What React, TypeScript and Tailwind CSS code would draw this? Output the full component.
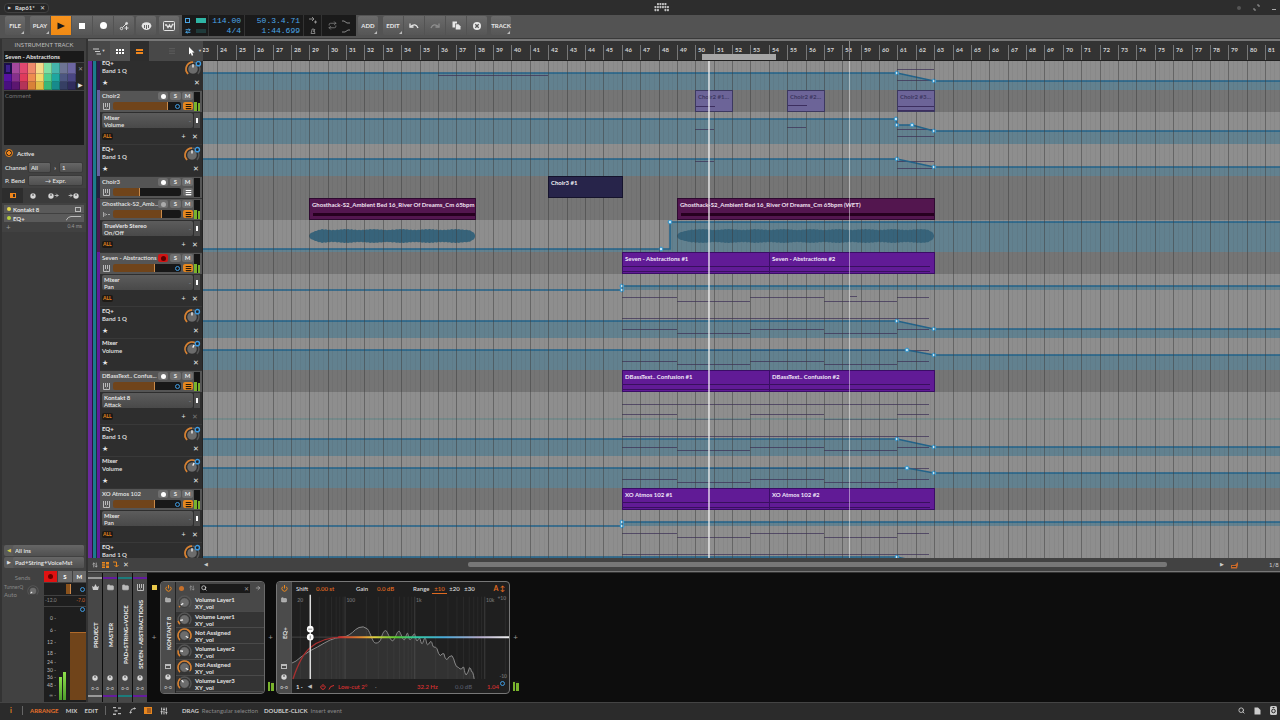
import React from 'react';
import {
  ArrowRight,
  ArrowUpDown,
  Folder,
  Menu,
  Repeat,
  Search,
  SlidersVertical,
  Spline,
} from 'lucide-react';

const FIRST_BAR = 23;
const BAR_WIDTH = 18.38;
const FIRST_BAR_X = -4;
const SIDE_WIDTH = 203;

const barX = (bar: number) => Math.round(FIRST_BAR_X + (bar - FIRST_BAR) * BAR_WIDTH);

// Only the bars that fit in the window
const BARS = Array.from({ length: Math.ceil((window.innerWidth - SIDE_WIDTH) / BAR_WIDTH) }, (_, i) => FIRST_BAR + i);

type Point = [number, number];
type Note = [number, number, number];

interface Clip {
  from: number;
  to: number;
  label: string;
  className: string;
  lines?: Note[];
}

interface Lane {
  title: string;
  param: string;
  kind: 'selector' | 'knob';
  points: Point[];
  base?: number;
  markers?: Point[];
  notes?: Note[];
  thin?: boolean;
  waves?: [number, number][];
}

interface Track {
  name: string;
  strip: string;
  volume: number;
  audio?: boolean;
  armed?: boolean;
  ring?: boolean;
  lanesOpen?: boolean;
  clips: Clip[];
  lanes: Lane[];
}

// Two alternating note levels plus an optional line held over the whole part
const pattern = (a: number, b: number, full?: number): Note[] => {
  const notes: Note[] = [
    [46, 49, a],
    [49, 53, b],
    [53, 57, a],
    [57, 61, b],
    [61, 62.7, a],
  ];
  if (full !== undefined) notes.push([46, 62.7, full]);
  return notes;
};

const eqLane = (notes: Note[] = []): Lane => ({
  title: 'EQ+',
  param: 'Band 1 Q',
  kind: 'knob',
  points: [[0, 15], [61, 15], [63, 23], [200, 23]],
  markers: [[61, 15], [63, 23]],
  notes,
});

const volumeLane: Lane = {
  title: 'Mixer',
  param: 'Volume',
  kind: 'knob',
  points: [[0, 12], [61.5, 12], [63, 17], [200, 17]],
  markers: [[61.5, 12], [63, 17]],
  notes: pattern(23, 26, 12),
};

const panLane: Lane = {
  title: 'Mixer',
  param: 'Pan',
  kind: 'selector',
  base: 16,
  points: [[0, 16], [46, 16], [46, 12], [200, 12]],
  markers: [[46, 16], [46, 12]],
  notes: pattern(23, 27),
};

const purpleClips = (name: string): Clip[] => [
  { from: 46, to: 54, label: `${name} #1`, className: 'border-[#3a0d66] bg-[#611b96] text-[#f0e6f8]', lines: [[46, 54, 13], [46, 54, 18]] },
  { from: 54, to: 63, label: `${name} #2`, className: 'border-[#3a0d66] bg-[#611b96] text-[#f0e6f8]', lines: [[54, 62.7, 13], [54, 62.7, 18]] },
];

const choirClip = 'border-[#3c3860] bg-[#6c6498] text-[#3d3762]';
const ghostClip = 'border-[#2e0a30] bg-[#53164f] text-[#f0e0f0]';
const ghostLabel = 'Ghosthack-S2_Ambient Bed 16_River Of Dreams_Cm 65bpm (WET)';

const TRACKS: Track[] = [
  {
    name: 'Choir2',
    strip: 'bg-[#6660a0]',
    volume: 80,
    ring: true,
    lanesOpen: true,
    clips: [
      { from: 50, to: 52, label: 'Choir2 #1…', className: choirClip, lines: [[50, 51, 15]] },
      { from: 55, to: 57, label: 'Choir2 #2…', className: choirClip, lines: [[55, 56, 14]] },
      { from: 61, to: 63, label: 'Choir2 #3…', className: choirClip, lines: [[61, 63, 15], [61, 63, 19]] },
    ],
    lanes: [
      {
        title: 'Mixer',
        param: 'Volume',
        kind: 'selector',
        points: [[0, 7], [60.9, 7], [61, 13], [61.8, 13], [63, 19], [200, 19]],
        markers: [[60.9, 7], [61, 13], [61.8, 13], [63, 19]],
        notes: [[50, 51, 17], [55, 56, 15], [61, 63, 17], [61, 63, 24]],
      },
      eqLane([[50, 51, 17], [61, 63, 17], [61, 63, 24]]),
    ],
  },
  {
    name: 'Choir3',
    strip: 'bg-[#24213f]',
    volume: 39,
    clips: [{ from: 42, to: 46, label: 'Choir3 #1', className: 'border-[#15132c] bg-[#27244a] text-[#f0f0f4]' }],
    lanes: [],
  },
  {
    name: 'Ghosthack-S2_Amb...',
    strip: 'bg-[#4f1850]',
    volume: 72,
    audio: true,
    lanesOpen: true,
    clips: [
      { from: 29, to: 38, label: ghostLabel, className: ghostClip },
      { from: 49, to: 63, label: ghostLabel, className: ghostClip },
    ],
    lanes: [
      {
        title: 'TrueVerb Stereo',
        param: 'On/Off',
        kind: 'selector',
        points: [[0, 29], [48.65, 29], [48.65, 2], [200, 2]],
        markers: [[48.15, 29], [48.65, 2]],
        waves: [[29, 38], [49, 63]],
      },
    ],
  },
  {
    name: 'Seven - Abstractions',
    strip: 'bg-[#641c9c]',
    volume: 61,
    armed: true,
    ring: true,
    lanesOpen: true,
    clips: purpleClips('Seven - Abstractions'),
    lanes: [{ ...panLane, notes: [...pattern(23, 27), [58.4, 58.8, 22]] }, eqLane(pattern(23, 27, 12)), volumeLane],
  },
  {
    name: 'DBassText.. Confus...',
    strip: 'bg-[#641c9c]',
    volume: 61,
    ring: true,
    lanesOpen: true,
    clips: purpleClips('DBassText.. Confusion'),
    lanes: [
      { title: 'Kontakt 8', param: 'Attack', kind: 'selector', thin: true, base: 27, points: [[0, 27], [200, 27]], notes: pattern(22, 27, 12) },
      eqLane(pattern(23, 26, 12)),
      volumeLane,
    ],
  },
  {
    name: 'XO Atmos 102',
    strip: 'bg-[#641c9c]',
    volume: 61,
    ring: true,
    lanesOpen: true,
    clips: purpleClips('XO Atmos 102'),
    lanes: [panLane, eqLane([[46, 62.7, 12]])],
  },
];

const PALETTE = [
  ['#3d1f8c', '#a3489c', '#e0486f', '#ef8a6a', '#f6d98a', '#7fdfa4', '#45b4ac', '#6d7494', '#6c66a2'],
  ['#5612a0', '#86308c', '#df3b5c', '#ee8c50', '#f3d76c', '#4fcf90', '#1fa6a0', '#4c5680', '#4a4682'],
  ['#48107e', '#5c1670', '#b43458', '#d88238', '#e3bd48', '#38b878', '#178a8c', '#363f64', '#302c5c'],
];

function Knob({ value = 0.6, ring = false, size = 14 }: { value?: number; ring?: boolean; size?: number }) {
  const angle = (135 + value * 270) * (Math.PI / 180);
  const start = 135 * (Math.PI / 180);
  const p = (a: number, r: number) => `${8 + Math.cos(a) * r} ${9 + Math.sin(a) * r}`;
  return (
    <svg width={size} height={size} viewBox="0.5 1.5 15 15" fill="none" className="shrink-0 overflow-visible">
      <path d={`M${p(start, 6.5)}A6.5 6.5 0 1 1 ${p(Math.PI * 0.25, 6.5)}`} stroke="#555" strokeWidth="1.4" />
      <path d={`M${p(start, 6.5)}A6.5 6.5 0 ${value > 0.66 ? 1 : 0} 1 ${p(angle, 6.5)}`} stroke="#d9802e" strokeWidth="1.6" />
      <circle cx="8" cy="9" r="4.8" fill="#6c6c6c" stroke="#2a2a2a" strokeWidth="0.6" />
      <path d={`M${p(angle, 1.5)}L${p(angle, 4.4)}`} stroke="#eee" strokeWidth="1.3" />
      {ring && <circle cx="13" cy="4" r="2" fill="#222" stroke="#3f9be0" strokeWidth="1.3" />}
    </svg>
  );
}

function Ring({ className = '' }: { className?: string }) {
  return <span className={`block size-[5px] rounded-full border border-[#3f9be0] ${className}`} />;
}

function DialIcon() {
  return (
    <svg width="6" height="6" viewBox="0 0 6 6" className="shrink-0">
      <circle cx="3" cy="3" r="2.7" fill="#d6d6d6" />
      <path d="M3 3V0.8" stroke="#333" strokeWidth="0.9" />
    </svg>
  );
}

function PowerIcon() {
  return (
    <svg width="7" height="7" viewBox="0 0 7 7" fill="none" stroke="#e8871e">
      <path d="M1.700 1.700A2.600 2.600 0 1 0 5.300 1.700M3.500 0V3.500" />
    </svg>
  );
}

function PianoIcon({ className = '' }: { className?: string }) {
  return (
    <svg width="7" height="7" viewBox="0 0 7 7" className={className}>
      <path d="M0.5 0V6.500H6.500V0" stroke="#bbb" fill="none" />
      <path d="M2.500 0V4M4.500 0V4" stroke="#bbb" />
      <path d="M3.500 4V6" stroke="#888" strokeWidth="0.6" />
    </svg>
  );
}

function WaveIcon() {
  return (
    <svg width="7" height="7" viewBox="0 0 7 7">
      <path d="M0.5 1V6M2 2V5M3.5 3V4M5 3.5H7" stroke="#bbb" strokeWidth="0.8" />
    </svg>
  );
}

function Meter({ left, right }: { left: number; right: number }) {
  return (
    <span className="flex h-full w-[6px] items-end gap-px bg-[#151515]">
      <span className="flex-1 bg-[#79b32c]" style={{ height: `${left}%` }} />
      <span className="flex-1 bg-[#79b32c]" style={{ height: `${right}%` }} />
    </span>
  );
}

function ToolButton({ label, children, className = '', corner = false }: { label: string; children?: React.ReactNode; className?: string; corner?: boolean }) {
  return (
    <button
      aria-label={label}
      className={`relative flex h-[19px] w-[20px] items-center justify-center bg-linear-to-b from-[#6b6b6b] to-[#565656] text-[6px] font-bold text-[#e8e8e8] ${className}`}
    >
      {children}
      {corner && <span className="absolute right-px bottom-px border-b-3 border-l-3 border-b-[#bbb] border-l-transparent" />}
    </button>
  );
}

function TitleBar() {
  return (
    <header className="flex h-[15px] shrink-0 items-center justify-between bg-[#2d2d2d] px-1 text-[#ddd]">
      <div className="flex h-[10px] items-center gap-1 rounded-sm border border-[#414141] bg-[#262626] px-[3px] text-[6px]">
        <span className="text-[4px]">▶</span>
        <span className="font-bold">Rap61*</span>
        <button aria-label="Close project" className="pl-px">✕</button>
      </div>
      <svg width="16" height="9" viewBox="0 0 16 9" fill="#c4c4c4" className="ml-[38px]">
        {[[3, 0], [5.5, 0], [8, 0], [10.5, 0], [0.5, 3], [3, 3], [5.5, 3], [8, 3], [10.5, 3], [13, 3], [0.5, 6], [3, 6], [10.5, 6], [13, 6]].map(([x, y]) => (
          <rect key={`${x}-${y}`} x={x} y={y} width="1.9" height="2.2" rx="0.6" />
        ))}
      </svg>
      <div className="flex items-center gap-[12px]">
        <span className="size-1 rounded-full bg-[#555]" />
        <svg width="7" height="7" viewBox="0 0 7 7" stroke="#999" fill="none">
          <path d="M4 1H6V3M3 6H1V4" />
        </svg>
        <span className="mt-1 h-px w-1 bg-[#aaa]" />
      </div>
    </header>
  );
}

function Transport() {
  return (
    <div className="flex h-[24px] shrink-0 items-center border-b border-[#3a3a3a] bg-[#535353] pb-[2px] pl-[5px]">
      <ToolButton label="File" corner className="rounded-xs">FILE</ToolButton>
      <div className="ml-[5px] flex gap-px">
        <ToolButton label="Play menu" corner className="rounded-l-xs">PLAY</ToolButton>
        <ToolButton label="Play" className="from-[#f7931e] to-[#f08a14]">
          <svg width="8" height="8" viewBox="0 0 8 8"><path d="M0.500 0.500L8 4L0.500 7.500Z" fill="#1a1a1a" /></svg>
        </ToolButton>
        <ToolButton label="Stop"><span className="size-[6px] bg-white" /></ToolButton>
        <ToolButton label="Record"><span className="size-[7px] rounded-full bg-white" /></ToolButton>
        <ToolButton label="Automation write" className="rounded-r-xs">
          <svg width="10" height="10" viewBox="0 0 10 10" fill="none" stroke="#ddd">
            <circle cx="2.500" cy="7.500" r="1.200" /><path d="M3.300 6.700L7 3" /><circle cx="7.600" cy="2.400" r="1" fill="#ddd" />
            <path d="M5.500 7H9.500M7.500 5V9" />
          </svg>
        </ToolButton>
      </div>
      <ToolButton label="Play MIDI" className="ml-[2px] rounded-xs">
        <svg width="11" height="10" viewBox="0 0 11 10">
          <path d="M1.500 2.500Q5.500 0 9.500 2.500L10.500 5Q9 9 5.500 9Q2 9 0.500 5Z" fill="#e4e4e4" />
          <path d="M3.500 4V7M5.500 4V8M7.500 4V7" stroke="#555" strokeWidth="0.900" />
        </svg>
      </ToolButton>
      <ToolButton label="Editor window" className="ml-[3px] rounded-xs">
        <svg width="12" height="10" viewBox="0 0 12 10" fill="none" stroke="#e4e4e4">
          <rect x="0.500" y="0.500" width="11" height="9" rx="1" />
          <path d="M2 4H3.500L5 6.500L6.500 4L8 6.500L9.500 3.500H10.500" strokeWidth="1.300" />
        </svg>
      </ToolButton>
      <div className="ml-[3px] flex h-[21px] items-stretch gap-px bg-[#333] font-[Liberation_Mono,monospace] text-[8px] leading-[10px] text-[#4ba6e6]">
        <div className="grid w-[26px] grid-cols-[8px_10px] place-content-center items-center gap-x-[3px] gap-y-[5px] bg-[#1a1a1a]">
          <span className="size-[5px] border border-[#4ba6e6]" />
          <span className="h-[5px] bg-[#2fb5a5]" />
          <ArrowUpDown size={6} strokeWidth={4} className="rotate-90" />
          <span className="h-1 bg-[#1f3a3a]" />
        </div>
        <div className="w-[35px] bg-[#1a1a1a] pt-px pr-[3px] text-right"><div>114.00</div><div>4/4</div></div>
        <div className="w-[58px] bg-[#1a1a1a] pt-px pr-[3px] text-right"><div>50.3.4.71</div><div>1:44.699</div></div>
        <div className="flex w-[17px] flex-col items-center justify-center gap-1 bg-[#1a1a1a]">
          <svg width="8" height="7" viewBox="0 0 8 7" fill="none" stroke="#999"><path d="M0 2H5M3 0L5 2L3 4M5 5H8M6.500 3.500V6.500" strokeWidth="0.900" /></svg>
          <svg width="6" height="6" viewBox="0 0 6 6" fill="none" stroke="#999"><path d="M2.200 1H3.800L5 5.500H1ZM3 4L5 1" strokeWidth="0.800" /></svg>
        </div>
        <div className="flex w-[34px] items-center justify-center gap-[5px] bg-[#1a1a1a] text-[#888]">
          <Repeat size={9} strokeWidth={2} />
          <svg width="8" height="16" viewBox="0 0 8 16" fill="none" stroke="#888"><path d="M0 3H2L5 5H8M0 14H3L6 12H8" /></svg>
        </div>
      </div>
      <ToolButton label="Add" corner className="ml-[2px] rounded-xs">ADD</ToolButton>
      <div className="ml-[5px] flex gap-px">
        <ToolButton label="Edit" corner className="rounded-l-xs">EDIT</ToolButton>
        <ToolButton label="Undo">
          <svg width="10" height="8" viewBox="0 0 10 8" fill="none" stroke="#e8e8e8" strokeWidth="1.300"><path d="M1.500 4.500Q6.500 0.500 9 6" /><path d="M1 1.500V5H4.500" /></svg>
        </ToolButton>
        <ToolButton label="Redo">
          <svg width="10" height="8" viewBox="0 0 10 8" fill="none" stroke="#8f8f8f" strokeWidth="1.300"><path d="M8.500 4.500Q3.500 0.500 1 6" /><path d="M9 1.500V5H5.500" /></svg>
        </ToolButton>
        <ToolButton label="Duplicate">
          <svg width="9" height="9" viewBox="0 0 9 9" fill="#e8e8e8"><path d="M0.500 0.500H5V2.500H3V6.500H0.500Z" /><path d="M3.700 3.200H6.500L8.500 5.200V8.500H3.700Z" /></svg>
        </ToolButton>
        <ToolButton label="Delete" className="rounded-r-xs">
          <svg width="8" height="8" viewBox="0 0 8 8"><circle cx="4" cy="4" r="4" fill="#e8e8e8" /><path d="M2.300 2.300L5.700 5.700M5.700 2.300L2.300 5.700" stroke="#555" strokeWidth="1.300" /></svg>
        </ToolButton>
      </div>
      <ToolButton label="Track" corner className="ml-1 rounded-xs">TRACK</ToolButton>
    </div>
  );
}

function Select({ label, options, className = '' }: { label: string; options: string[]; className?: string }) {
  return (
    <select
      aria-label={label}
      className={`h-[11px] appearance-none rounded-xs border border-[#3a3a3a] bg-linear-to-b from-[#666] to-[#505050] px-[2px] text-[6px] leading-[9px] font-semibold text-[#e6e6e6] ${className}`}
    >
      {options.map((o) => <option key={o}>{o}</option>)}
    </select>
  );
}

const METER_SCALE = [
  { label: '0', height: 'h-[12px]' },
  { label: '6', height: 'h-[12px]' },
  { label: '12', height: 'h-[11px]' },
  { label: '18', height: 'h-[9px]' },
  { label: '24', height: 'h-[8px]' },
  { label: '30', height: 'h-[7px]' },
  { label: '36', height: 'h-[8px]' },
  { label: '48', height: 'h-[10px]' },
  { label: '∞', height: 'h-[7px]' },
];

function ChannelStrip() {
  return (
    <div className="flex h-[131px] gap-px">
      <div className="w-[41px] bg-[#414141] text-center text-[6px] text-[#888]">
        <div className="pt-[3px] leading-[8px]">Sends</div>
        <div className="flex items-center justify-between pt-[2px] pr-1 text-left">
          <div className="pl-[2px] leading-[7px]"><div className="text-[5px]">TunnerQ</div><div>Auto</div></div>
          <Knob value={0} size={12} />
        </div>
      </div>
      <div className="flex flex-1 flex-col gap-px">
        <div className="flex gap-px text-[6px] font-bold text-white">
          <button aria-label="Record arm" className="flex h-[11px] flex-1 items-center justify-center bg-[#e01212]"><span className="size-[5px] rounded-full bg-[#6a0000]" /></button>
          <button className="h-[11px] flex-1 bg-[#6a6a6a]">S</button>
          <button className="h-[11px] flex-1 bg-[#6a6a6a]">M</button>
        </div>
        <div className="flex h-[12px] items-center justify-end gap-[9px] bg-[#1e1e1e] pr-px">
          <span className="h-[10px] w-[5px] border-r border-[#d08a4a] bg-[#8a521c]" />
          <Ring />
        </div>
        <div className="flex h-[10px] items-center justify-between bg-[#1e1e1e] px-px text-[5px]">
          <span className="text-[#888]">-12.0</span><span className="text-[#d3652b]">-7.0</span>
        </div>
        <div className="flex flex-1 justify-between bg-[#1e1e1e] pb-[2px]">
          <div className="w-[12px] pt-[8px] text-right text-[5px] leading-[7px] text-[#bbb]">
            {METER_SCALE.map((s) => <span key={s.label} className={`block ${s.height}`}>{s.label} -</span>)}
          </div>
          <div className="flex items-end gap-px">
            <span className="h-[23px] w-[3px] bg-linear-to-t from-[#4e9e2c] to-[#8ee04c]" />
            <span className="h-[28px] w-[3px] bg-linear-to-t from-[#4e9e2c] to-[#8ee04c]" />
          </div>
          <div className="flex w-[17px] flex-col items-end">
            <Ring className="mr-px" />
            <input
              type="range"
              aria-label="Track level"
              defaultValue={75}
              className="mt-[20px] w-[16px] flex-1 appearance-none border-t border-[#b06a2a] bg-[#70441a] [&::-webkit-slider-thumb]:size-0 [&::-webkit-slider-thumb]:appearance-none"
            />
          </div>
        </div>
      </div>
    </div>
  );
}

function Inspector() {
  return (
    <aside className="flex w-[88px] shrink-0 flex-col border-r-2 border-l-2 border-[#333] bg-[#414141] text-[6px] text-[#e2e2e2]">
      <h2 className="h-[12px] pt-[2px] text-center leading-[7px] text-[#bcbcbc]">INSTRUMENT TRACK</h2>
      <input aria-label="Track name" defaultValue="Seven - Abstractions" className="mx-[2px] h-[11px] bg-[#1a1a1a] px-px font-bold" />
      <div className="mx-[2px] mt-px flex h-[27px] bg-[#262626]">
        <div className="grid w-[72px] grid-cols-9">
          {PALETTE.flat().map((c, i) => (
            <button
              key={c}
              aria-label={`Color ${i + 1}`}
              className={i === 0 ? 'border-2 border-[#1b0f48]' : 'border-r border-b border-black/20'}
              style={{ backgroundColor: c }}
            />
          ))}
        </div>
        <div className="flex flex-1 flex-col items-center justify-between py-px text-[6px]"><button aria-label="Reset color" className="text-[#999]">✕</button><button aria-label="More colors">▶</button></div>
      </div>
      <textarea aria-label="Comment" placeholder="Comment" className="mx-[2px] mt-px h-[54px] resize-none bg-[#1c1c1c] px-px placeholder:text-[#777]" />
      <label className="flex h-[16px] items-center gap-1 pl-[3px]">
        <input type="checkbox" defaultChecked className="size-[8px] appearance-none rounded-full border border-[#f0861c] bg-[radial-gradient(#f0861c_0_2px,#3a2a1a_2px)]" />
        <span className="font-bold">Active</span>
      </label>
      <div className="flex h-[13px] items-center pl-[3px] font-semibold">
        <span className="w-[22px]">Channel</span>
        <Select label="Input channel" options={['All']} className="ml-px w-[23px]" />
        <span className="w-2 text-center">›</span>
        <Select label="Output channel" options={['1']} className="w-[24px]" />
      </div>
      <div className="flex h-[13px] items-center pl-[3px] font-semibold">
        <span className="w-[23px]">P. Bend</span>
        <button className="h-[11px] w-[55px] rounded-xs border border-[#3a3a3a] bg-linear-to-b from-[#666] to-[#505050] leading-[9px]">→ Expr.</button>
      </div>
      <div className="mt-px flex h-[15px] items-center bg-[#3b3b3b] text-[#ccc]">
        <button aria-label="Devices" className="flex h-full w-[21px] items-center justify-center bg-[#2d2d2d]"><span className="h-[5px] w-[6px] border border-l-3 border-[#f0861c]" /></button>
        <button aria-label="Timing" className="flex w-[20px] justify-center"><DialIcon /></button>
        <button aria-label="Output" className="flex w-[20px] items-center justify-center"><DialIcon /><ArrowRight size={5} strokeWidth={4} /></button>
        <button aria-label="Input" className="flex w-[20px] items-center justify-center"><ArrowRight size={5} strokeWidth={4} /><DialIcon /></button>
      </div>
      <ul className="mx-[2px] mt-[2px] flex flex-col gap-px font-bold">
        <li className="flex h-[8px] items-center gap-[2px] bg-[#5a5a5a] px-[3px]"><span className="size-1 rounded-full bg-[#e6d84c]" /><span className="flex-1">Kontakt 8</span><span className="h-[5px] w-[6px] border border-[#bbb]" /></li>
        <li className="flex h-[8px] items-center gap-[2px] bg-[#5a5a5a] px-[3px]">
          <span className="size-1 rounded-full bg-[#b6cf3c]" /><span className="flex-1">EQ+</span>
          <svg width="15" height="6" viewBox="0 0 15 6" fill="none" stroke="#bbb"><path d="M0 5.500Q2 1.500 5 1.500H15" /></svg>
        </li>
      </ul>
      <div className="flex h-[10px] items-center justify-between px-1 text-[5px] text-[#999]"><button aria-label="Add device" className="text-[8px]">+</button><span>0.4 ms</span></div>
      <div className="flex-1 bg-[#3c3c3c]" />
      <div className="flex h-[26px] flex-col gap-px px-[2px]">
        <div className="flex items-center rounded-xs bg-[#5a5a5a]"><span className="w-[9px] text-center text-[5px] text-[#d8c84a]">◀</span><Select label="Audio input" options={['All ins']} className="flex-1 border-0" /></div>
        <div className="flex items-center rounded-xs bg-[#5a5a5a]"><span className="w-[9px] text-center text-[5px]">▶</span><Select label="Audio output" options={['Pad+String+VoiceMst']} className="w-[71px] border-0" /></div>
      </div>
      <ChannelStrip />
    </aside>
  );
}

function TrackHeader({ track }: { track: Track }) {
  const fader = `linear-gradient(to right, #70441a ${track.volume}%, #181818 ${track.volume}%)`;
  const silent = track.name === 'Choir3';
  return (
    <div className="flex h-[22px] gap-px border-t border-[#333] bg-[#555] pr-[2px] pl-[2px]">
      <div className="flex min-w-0 flex-1 flex-col gap-px">
        <div className="flex items-center gap-px">
          <span className="w-0 flex-1 text-[6px] leading-[10px] font-semibold whitespace-nowrap">{track.name}</span>
          <button aria-label="Record arm" className={`flex h-[8px] w-[10px] items-center justify-center rounded-xs ${track.armed ? 'bg-[#d01414]' : 'bg-[#6e6e6e]'}`}>
            <span className={`size-[5px] rounded-full ${track.armed ? 'bg-[#5a0000]' : track.audio ? 'bg-[#aaa]' : 'bg-white'}`} />
          </button>
          <button aria-label="Solo" className="ml-px h-[8px] w-[11px] rounded-xs bg-[#6e6e6e] text-[6px] leading-[8px] font-bold">S</button>
          <button aria-label="Mute" className="h-[8px] w-[11px] rounded-xs bg-[#6e6e6e] text-[6px] leading-[8px] font-bold">M</button>
        </div>
        <div className="flex items-center">
          <span className="w-[11px] pl-px">{track.audio ? <WaveIcon /> : <PianoIcon />}</span>
          <span className="relative flex h-[8px] flex-1">
            <input
              type="range"
              aria-label={`${track.name} volume`}
              defaultValue={track.volume}
              className="h-[8px] w-full appearance-none rounded-xs [&::-webkit-slider-thumb]:h-[8px] [&::-webkit-slider-thumb]:w-px [&::-webkit-slider-thumb]:appearance-none [&::-webkit-slider-thumb]:bg-[#c98a4a]"
              style={{ background: fader }}
            />
            {track.ring && <Ring className="absolute top-[2px] right-px" />}
          </span>
          <button
            aria-label="Show automation lanes"
            className={`ml-[2px] flex h-[8px] w-[10px] items-center justify-center rounded-xs ${track.lanesOpen ? 'bg-[#e8871e] text-[#2a1a08]' : 'bg-[#6e6e6e] text-white'}`}
          >
            <Menu size={7} strokeWidth={4} />
          </button>
        </div>
      </div>
      <div className="my-px"><Meter left={silent ? 0 : 46} right={silent ? 0 : 42} /></div>
    </div>
  );
}

function LaneHeader({ lane }: { lane: Lane }) {
  if (lane.kind === 'selector') {
    return (
      <div className="h-[32px] bg-[#2e2e2e] px-[2px] pt-px">
        <div className="flex h-[15px] gap-px">
          <button className="flex flex-1 items-center justify-between rounded-xs bg-linear-to-b from-[#5c5c5c] to-[#494949] px-[2px] text-left text-[6px] leading-[7px]">
            <span><span className="block font-bold">{lane.title}</span><span className="block font-semibold">{lane.param}</span></span>
            <span className="text-[#999]">-</span>
          </button>
          <button aria-label="Show value" className="flex w-[6px] items-center justify-center bg-[#4c4c4c]"><span className="h-[5px] w-[2px] bg-white" /></button>
        </div>
        <div className="flex h-[16px] items-center text-[7px]">
          <button className="mr-auto rounded-xs bg-[#1e1a16] px-px text-[5px] leading-[7px] font-bold text-[#e8871e]">ALL</button>
          <button aria-label="Add lane" className="w-[11px]">+</button>
          <button aria-label="Remove lane" className={lane.thin ? 'w-[11px] text-[#777]' : 'w-[11px]'}>✕</button>
        </div>
      </div>
    );
  }
  return (
    <div className="flex h-[32px] flex-col border-t border-[#393939] bg-[#2e2e2e] pl-[2px]">
      <div className="flex h-[19px] items-start justify-between pr-[2px]">
        <div className="text-[6px] leading-[8px]"><div className="font-bold">{lane.title}</div><div className="font-semibold">{lane.param}</div></div>
        <span className="pt-[2px]"><Knob ring value={lane.title === 'EQ+' ? 0.5 : 0.6} size={16} /></span>
      </div>
      <div className="flex items-center justify-between pr-[3px] text-[7px] leading-[9px]">
        <button aria-label="Favorite lane">★</button>
        <button aria-label="Remove lane">✕</button>
      </div>
    </div>
  );
}

function wavePath(from: number, to: number) {
  const x0 = barX(from);
  const x1 = barX(to);
  const top: string[] = [];
  const bottom: string[] = [];
  for (let x = x0; x <= x1; x += 1) {
    const edge = Math.min(1, Math.sqrt((x - x0) / 16) + 0.1, Math.sqrt((x1 - x) / 9) + 0.15);
    const h = (6.4 + Math.sin(x * 1.7) * 0.3 + Math.sin(x * 0.23) * 0.4) * edge;
    top.push(`${x} ${16 - h}`);
    bottom.unshift(`${x} ${16 + h}`);
  }
  return `M${top.join('L')}L${bottom.join('L')}Z`;
}

function LaneRow({ lane }: { lane: Lane }) {
  const base = lane.base ?? 32;
  const line = lane.points.map(([bar, y]) => `${barX(bar)} ${y}`).join('L');
  return (
    <div className="relative h-[32px] overflow-hidden bg-[#8e8e8e]">
      <svg width="100%" height="32" className="absolute inset-0" fill="none">
        <path d={`M${barX(0)} ${base}L${line}L${barX(200)} ${base}Z`} fill="#447891" fillOpacity="0.58" />
        {lane.waves?.map(([a, b]) => <path key={a} d={wavePath(a, b)} fill="#37637a" />)}
        {lane.notes?.map(([a, b, y]) => <path key={`${a}-${y}`} d={`M${barX(a)} ${y + 0.5}H${barX(b)}`} stroke="#3f3358" strokeOpacity="0.75" />)}
        <path d={`M${line}`} stroke={lane.thin ? '#5e8586' : '#22638a'} strokeWidth={lane.thin ? 1 : 1.5} />
        {lane.markers?.map(([bar, y]) => <circle key={`${bar}-${y}`} cx={barX(bar)} cy={y} r="1.9" fill="#bfe6fa" stroke="#2a8fc8" />)}
      </svg>
    </div>
  );
}

function ClipRow({ clips }: { clips: Clip[] }) {
  return (
    <div className="relative h-[22px] bg-[#757575]">
      {clips.map((clip) => (
        <div
          key={clip.from}
          className={`absolute inset-y-0 z-10 overflow-hidden border px-[2px] pt-px text-[6px] leading-[9px] font-bold whitespace-nowrap ${clip.className}`}
          style={{ left: barX(clip.from), width: barX(clip.to) - barX(clip.from) + 1 }}
        >
          <svg width="100%" height="20" className="absolute inset-0" stroke="#1c0a38" strokeOpacity="0.6">
            {clip.lines?.map(([a, b, y]) => <path key={y} d={`M0 ${y + 0.5}H${barX(b) - barX(a)}`} />)}
            {clip.label === ghostLabel && <path d="M3 15.500H1000" stroke="#26001f" strokeWidth="3" strokeOpacity="1" />}
          </svg>
          <span className="relative">{clip.label}</span>
        </div>
      ))}
    </div>
  );
}

function Ruler() {
  return (
    <div className="relative h-[20px] shrink-0 overflow-hidden border-b border-[#222] bg-[#333]">
      {BARS.map((bar) => (
        <span
          key={bar}
          className="absolute top-1 bottom-0 border-l border-[#777] pt-px pl-[2px] text-[6px] leading-[7px] font-bold text-[#d4d4d4]"
          style={{ left: barX(bar) }}
        >
          {bar}
        </span>
      ))}
      <span className="absolute bottom-0 h-[6px] bg-[#a6a6a6]" style={{ left: barX(50.35), width: barX(54.4) - barX(50.35) }} />
      <span className="absolute inset-y-0 w-px bg-[#888]" style={{ left: barX(58.35) }} />
    </div>
  );
}

function Grid() {
  return (
    <svg width="100%" height="100%" className="pointer-events-none absolute inset-0">
      {BARS.map((bar) => (
        <g key={bar}>
          <rect x={barX(bar)} width="1" height="100%" fill="#3c3c3c" fillOpacity="0.5" />
          {[0.25, 0.5, 0.75].map((q) => <rect key={q} x={barX(bar + q)} width="1" height="100%" fill="#333" fillOpacity="0.07" />)}
        </g>
      ))}
    </svg>
  );
}

function Arranger() {
  const first = eqLane([[61, 63, 11], [61, 63, 22], [36, 42, 17]]);
  return (
    <section className="flex min-h-0 flex-1 overflow-hidden bg-[#2e2e2e]">
      <div className="flex w-[115px] shrink-0 flex-col text-[#e6e6e6]">
        <div className="z-10 flex h-[20px] shrink-0 items-center bg-[#484848] text-[#d0d0d0]">
          <button aria-label="Track list" className="flex w-[22px] items-center justify-center gap-px">
            <svg width="8" height="7" viewBox="0 0 8 7" stroke="#ccc"><path d="M0 1H6M2 3.500H7M3.500 6H8" /></svg>
            <span className="text-[4px]">▼</span>
          </button>
          <button aria-label="Launcher" className="flex h-full w-[20px] items-center justify-center bg-[#515151]">
            <span className="grid grid-cols-3 gap-px">{[0, 1, 2, 3, 4, 5].map((i) => <span key={i} className="size-[2px] bg-white" />)}</span>
          </button>
          <button aria-label="Arranger" className="flex h-full w-[19px] flex-col items-center justify-center gap-px bg-[#2d2d2d]"><span className="h-[2px] w-[7px] bg-[#f0861c]" /><span className="h-[2px] w-[7px] bg-[#f0861c]" /></button>
          <span className="flex-1" />
          <Menu size={8} className="mr-[12px] text-[#666]" />
          <button aria-label="Pointer tool" className="mr-px flex items-center">
            <svg width="7" height="9" viewBox="0 0 7 9"><path d="M1 0L6.500 5.500H4.200L5.200 8.200L3.800 8.700L2.800 6L1 7.500Z" fill="#fff" /></svg>
            <span className="pl-[3px] text-[4px]">▼</span>
          </button>
        </div>
        <div className="flex min-h-0 flex-1">
          <div className="w-[5px] border-r border-[#2a1440] bg-[#6a2a9c]" />
          <div className="w-1 border-r border-[#12363c] bg-[#1c7c8c]" />
          <div className="-mt-[3px] min-w-0 flex-1">
            <div className="border-l-3 border-[#331a4c]"><LaneHeader lane={first} /></div>
            {TRACKS.map((track) => (
              <div key={track.name} className="flex">
                <div className={`w-[3px] ${track.strip}`} />
                <div className="min-w-0 flex-1 border-r border-[#222]">
                  <TrackHeader track={track} />
                  {track.lanes.map((lane) => <LaneHeader key={lane.title + lane.param} lane={lane} />)}
                </div>
              </div>
            ))}
          </div>
        </div>
      </div>
      <div className="flex min-w-0 flex-1 flex-col">
        <Ruler />
        <div className="relative min-h-0 flex-1 overflow-hidden">
          <div className="-mt-[3px]">
            <LaneRow lane={first} />
            {TRACKS.map((track) => (
              <React.Fragment key={track.name}>
                <ClipRow clips={track.clips} />
                {track.lanes.map((lane) => <LaneRow key={lane.title + lane.param} lane={lane} />)}
              </React.Fragment>
            ))}
          </div>
          <Grid />
          <span className="absolute inset-y-0 z-20 w-[2px] bg-white/60" style={{ left: barX(50.72) }} />
          <span className="absolute inset-y-0 z-20 w-px bg-white/45" style={{ left: barX(58.35) }} />
        </div>
      </div>
    </section>
  );
}

function ArrangerFooter() {
  return (
    <div className="flex h-[13px] shrink-0 items-center overflow-hidden bg-[#424242] pl-1 text-[#ccc]">
      <div className="flex w-[112px] items-center gap-[4px] text-[#e8871e]">
        <ArrowUpDown size={6} strokeWidth={3} className="text-[#bbb]" />
        <svg width="7" height="6" viewBox="0 0 7 6" fill="#e8871e"><path d="M0 0H3V1.500H0ZM0 2.200H3V3.700H0ZM0 4.500H3V6H0ZM4 0H7V2.500H4ZM4 3.500H7V6H4Z" /></svg>
        <svg width="6" height="7" viewBox="0 0 6 7" fill="none" stroke="#e8871e"><path d="M0 1H3.500V6M1.500 4L3.500 6L5.500 4" /></svg>
        <span className="text-[7px] leading-[9px] text-[#ddd]">✕</span>
      </div>
      <span className="text-[5px]">◀</span>
      <div className="mx-[14px] flex h-[5px] flex-1">
        <span className="w-1/4" />
        <span className="h-[5px] w-[71%] rounded-xs bg-[#777]" />
      </div>
      <span className="text-[5px]">▶</span>
      <svg width="9" height="8" viewBox="0 0 9 8" className="ml-[6px]" fill="#c8692a"><path d="M1 4H5L8 1V4L7 7.500H1Z" /><path d="M2 5.500H6" stroke="#333" /></svg>
      <span className="ml-[30px] w-[11px] text-[6px]">1/8</span>
    </div>
  );
}

const CHAIN = [
  { name: 'PROJECT', strip: 'bg-[#999]', icon: 'crown' },
  { name: 'MASTER', strip: 'bg-[#641c9c]', icon: 'folder' },
  { name: 'PAD+STRING+VOICE', strip: 'bg-[#1c7c7c]', icon: 'folder' },
  { name: 'SEVEN - ABSTRACTIONS', strip: 'bg-[#641c9c]', icon: 'piano' },
];

const MACROS = [
  { name: 'Volume Layer1', value: 0.04 },
  { name: 'Volume Layer1', value: 0.12 },
  { name: 'Not Assigned', value: 0.95 },
  { name: 'Volume Layer2', value: 0.2 },
  { name: 'Not Assigned', value: 0.95 },
  { name: 'Volume Layer3', value: 0.35 },
];

function DeviceSide({ name }: { name: string }) {
  return (
    <div className="flex w-[14px] shrink-0 flex-col items-center gap-[5px] bg-[#4b4b4b] py-[3px] text-[#ccc]">
      <PowerIcon />
      <Folder size={6} fill="#aaa" />
      <span className="flex flex-1 rotate-180 items-center justify-center text-[6px] font-bold text-[#e6e6e6] [writing-mode:vertical-rl]">{name}</span>
      <span className="h-[5px] w-[6px] border border-t-2 border-[#bbb]" />
      <DialIcon />
      <span className="text-[5px] leading-[5px]">o-o</span>
    </div>
  );
}

function AddSlot({ meter = false }: { meter?: boolean }) {
  return (
    <div className="flex w-[11px] shrink-0 flex-col items-center pt-[49px]">
      <button aria-label="Insert device" className="text-[8px] leading-[14px] text-[#999]">+</button>
      {meter && <div className="mt-[37px] h-[10px]"><Meter left={90} right={80} /></div>}
    </div>
  );
}

function KontaktDevice() {
  return (
    <div className="flex h-[113px] w-[105px] shrink-0 overflow-hidden rounded border border-[#6a6a6a] bg-[#333]">
      <DeviceSide name="KONTAKT 8" />
      <div className="flex min-w-0 flex-1 flex-col border-l border-[#222]">
        <div className="flex h-[12px] items-center gap-[5px] bg-[#484848] px-[3px]">
          <span className="size-[5px] rounded-full bg-[#c8702a]" />
          <ArrowUpDown size={6} strokeWidth={3} className="text-[#999]" />
          <label className="flex h-[9px] w-[50px] items-center bg-[#1a1a1a] px-px text-[#ddd]">
            <Search size={6} strokeWidth={3} />
            <input aria-label="Search parameters" className="w-0 min-w-0 flex-1 text-[6px]" />
            <span className="text-[6px] text-[#999]">✕</span>
          </label>
          <ArrowRight size={6} className="text-[#ddd]" />
        </div>
        <ul className="min-h-0 flex-1 overflow-hidden">
          {MACROS.map((m, i) => (
            <li key={i} className={`flex items-center gap-[3px] border-b border-[#4a4a4a] pl-px text-[6px] leading-[7px] font-bold text-[#e4e4e4] ${i === 0 ? 'h-[18px] bg-[#484848]' : 'h-[16px] bg-[#343434]'}`}>
              <Knob value={m.value} size={15} />
              <div><div>{m.name}</div><div>XY_vol</div></div>
            </li>
          ))}
        </ul>
      </div>
    </div>
  );
}

const FREQ_LINES = [118, 150, 175, 195, 212, 226, 237, 247, 317, 353, 380, 400, 417, 431, 443, 454, 526, 563, 590, 610, 627, 641, 653, 664, 736];
const SPECTRUM =
  'M93 280Q104 277 120 262Q134 252 148 243Q170 232 190 220Q208 209 225 205Q240 203 255 200Q266 196 275 188Q284 178 295 173Q308 167 320 177C330 188 336 222 346 220C352 220 358 216 361 208C366 188 372 180 377 183C385 194 389 214 397 213C405 208 408 184 416 184C422 190 426 212 432 210C436 204 438 190 441 190C444 194 445 210 449 210C454 208 458 192 462 192C466 198 466 213 470 213C474 212 474 204 478 205C481 210 481 222 485 222C489 220 490 205 494 205C498 208 498 225 502 225C506 224 508 215 512 215C516 217 516 230 520 232Q526 230 530 237Q534 254 540 258Q545 250 551 252Q553 268 560 270Q566 258 575 258Q581 266 584 280Q588 294 594 293Q600 300 604 298Q608 290 611 293Q614 314 618 316Q624 310 628 294Q632 294 634 306Q638 302 642 328';

function EqDevice() {
  return (
    <div className="flex h-[113px] w-[234px] shrink-0 overflow-hidden rounded border border-[#777] bg-[#1f1f1f] text-[6px] font-semibold text-[#ddd]">
      <DeviceSide name="EQ+" />
      <div className="flex flex-1 flex-col border-l border-[#555]">
        <div className="flex h-[12px] shrink-0 items-center pt-px pr-1 pl-[4px]">
          <span className="w-[20px]">Shift</span><span className="w-[40px] text-[#e06a20]">0.00 st</span>
          <span className="w-[21px]">Gain</span><span className="w-[36px] text-[#e06a20]">0.0 dB</span>
          <span className="w-[19px]">Range</span>
          <button className="w-[15px] border-b border-[#e06a20] leading-[9px] text-[#e06a20]">±10</button>
          <button className="w-[15px]">±20</button>
          <button className="w-[15px]">±30</button>
          <span className="ml-auto text-[7px] font-bold text-[#e06a20]">A ↕</span>
        </div>
        <svg width="100%" height="86" viewBox="93 72 654 258" preserveAspectRatio="xMinYMin meet" fill="none" className="shrink-0">
          <defs>
            <linearGradient id="band" x1="93" x2="747" y1="0" y2="0" gradientUnits="userSpaceOnUse">
              <stop offset="0" stopColor="#8a2020" /><stop offset="0.22" stopColor="#c23030" /><stop offset="0.32" stopColor="#e08a30" />
              <stop offset="0.38" stopColor="#e0d040" /><stop offset="0.48" stopColor="#58c830" /><stop offset="0.57" stopColor="#2fc8a0" />
              <stop offset="0.7" stopColor="#48a8d8" /><stop offset="0.86" stopColor="#b0a8c8" /><stop offset="1" stopColor="#eee" />
            </linearGradient>
          </defs>
          {FREQ_LINES.map((x) => <path key={x} d={`M${x} 80V328`} stroke="#2a2a2a" strokeWidth="3" />)}
          {[253, 463, 674].map((x) => <path key={x} d={`M${x} 80V328`} stroke="#3c3c3c" strokeWidth="3" />)}
          <path d="M93 202H747" stroke="#444" strokeWidth="3" />
          <path d={`${SPECTRUM}H93Z`} fill="#777" fillOpacity="0.22" />
          <path d={SPECTRUM} stroke="#8a8a8a" strokeWidth="3" />
          <path d="M96 328Q120 256 148 234Q185 202 245 202" stroke="#a83030" strokeWidth="4" />
          <path d="M235 202.500H747V201.500H235Z" stroke="url(#band)" strokeWidth="5" />
          <path d="M148 74V328" stroke="#eee" strokeWidth="4" />
          <circle cx="148" cy="178" r="10" fill="#fff" />
          <circle cx="148" cy="202" r="10" fill="#fff" />
          <path d="M142 178H154M148 197V207" stroke="#444" strokeWidth="2" />
          <g fill="#777" fontSize="15">
            <text x="109" y="97">20</text><text x="257" y="97">100</text><text x="467" y="97">1k</text><text x="678" y="97">10k</text>
            <text x="712" y="90">+10</text><text x="718" y="326">-10</text>
          </g>
        </svg>
        <div className="flex h-[13px] items-center pl-[4px] text-[#d83030]">
          <button className="w-[12px] text-left text-[#eee]">1 ·</button>
          <span className="w-[12px] text-[5px] text-[#bbb]">◀</span>
          <svg width="14" height="6" viewBox="0 0 14 6" fill="none" stroke="#d83030"><path d="M1.500 1.500A2.200 2.200 0 1 0 4.500 1.500M3 0V3M9 5.500Q10 1.500 14 1.500" /></svg>
          <span className="w-[37px] pl-[4px]">Low-cut 2°</span>
          <span className="w-[46px] pl-1 text-[#777]">·</span>
          <span className="w-[38px]">32.2 Hz</span>
          <span className="w-[32px] text-[#555a68]">0.0 dB</span>
          <span>1.04</span>
          <Ring className="mb-[6px] ml-px" />
        </div>
      </div>
    </div>
  );
}

function DevicePanel() {
  return (
    <section className="flex h-[129px] shrink-0 overflow-hidden bg-[#0d0d0d]">
      {CHAIN.map((c) => (
        <button key={c.name} className="mr-px flex w-[14px] shrink-0 flex-col items-center bg-[#474747] pt-[4px] pb-[5px] text-[#ccc]">
          <span className={`h-[2px] w-full ${c.strip}`} />
          <span className="flex h-[16px] items-center">
            {c.icon === 'folder' && <Folder size={7} fill="#bbb" />}
            {c.icon === 'piano' && <PianoIcon />}
            {c.icon === 'crown' && <svg width="7" height="6" viewBox="0 0 7 6" fill="#ccc"><path d="M0 2L2 3L3.500 0L5 3L7 2L6 6H1Z" /></svg>}
          </span>
          <span className="flex flex-1 rotate-180 items-center justify-center text-[6px] font-bold whitespace-nowrap text-[#eee] [writing-mode:vertical-rl]">{c.name}</span>
          <DialIcon />
          <span className="mt-1 mb-[4px] text-[5px] leading-[6px]">o-o</span>
          <span className={`h-[2px] w-full ${c.strip}`} />
        </button>
      ))}
      <div className="flex flex-1 pt-2">
        <div className="flex w-[12px] shrink-0 flex-col items-center">
          <span className="mt-[4px] size-[5px] bg-[#e8c84a]" />
          <button aria-label="Insert device" className="mt-[40px] text-[8px] leading-[14px] text-[#999]">+</button>
        </div>
        <KontaktDevice />
        <AddSlot meter />
        <EqDevice />
        <AddSlot meter />
      </div>
    </section>
  );
}

function StatusBar() {
  return (
    <footer className="flex h-[18px] shrink-0 items-center border-t border-[#444] bg-[#2b2b2b] px-[10px] pb-[2px] text-[6px] text-[#ccc]">
      <button aria-label="Info" className="w-[12px] text-left text-[7px] font-bold text-[#e8871e]">i</button>
      <nav className="flex h-[9px] w-[84px] items-center justify-between border-x border-[#666] px-[7px] leading-[9px] font-bold">
        <button className="text-[#e8702a]">ARRANGE</button>
        <button>MIX</button>
        <button>EDIT</button>
      </nav>
      <div className="flex w-[76px] items-center justify-between pr-[14px] pl-[7px]">
        <svg width="8" height="8" viewBox="0 0 8 8" fill="#bbb"><path d="M0 0H3V1.300H0ZM1.500 3.300H4.500V4.600H1.500ZM0 6.600H3V7.900H0ZM5 0.500H8V1.800H5ZM5 6H8V7.300H5Z" /></svg>
        <Spline size={7} strokeWidth={3} />
        <span className="h-[7px] w-[8px] border border-l-3 border-[#e8871e] bg-[#a85f20]" />
        <SlidersVertical size={8} strokeWidth={3} />
      </div>
      <div className="flex items-center gap-[3px]">
        <span className="font-bold">DRAG</span><span className="text-[#888]">Rectangular selection</span>
        <span className="ml-[3px] font-bold">DOUBLE-CLICK</span><span className="text-[#888]">Insert event</span>
      </div>
      <div className="-mr-[7px] ml-auto flex items-center gap-[9px]">
        <button aria-label="Search"><Search size={7} strokeWidth={3} /></button>
        <button aria-label="Files">
          <svg width="7" height="8" viewBox="0 0 7 8" fill="#ccc"><path d="M0.500 0.500H4L6.500 3V7.500H0.500Z" /></svg>
        </button>
        <button aria-label="Audio engine">
          <svg width="7" height="9" viewBox="0 0 7 9"><rect width="7" height="9" rx="1.500" fill="#ccc" /><circle cx="3.500" cy="5" r="1.800" fill="none" stroke="#2b2b2b" /><path d="M2.500 1.500H4.500" stroke="#2b2b2b" /></svg>
        </button>
      </div>
    </footer>
  );
}

export default function App() {
  return (
    <div className="flex h-screen flex-col overflow-hidden bg-[#333] font-[Lato,sans-serif] text-[#ddd]">
      <TitleBar />
      <Transport />
      <main className="flex min-h-0 flex-1">
        <Inspector />
        <div className="flex min-w-0 flex-1 flex-col border-t-2 border-[#777]">
          <Arranger />
          <ArrangerFooter />
          <div className="h-[2px] shrink-0 border-t border-[#777] bg-[#333]" />
          <DevicePanel />
        </div>
      </main>
      <StatusBar />
    </div>
  );
}
